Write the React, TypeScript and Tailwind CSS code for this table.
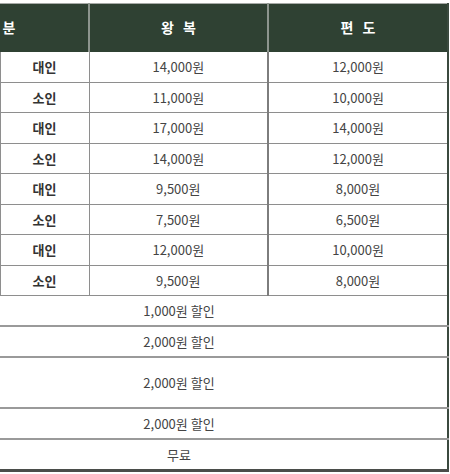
const fares = [
  { type: "대인", round: "14,000원", oneWay: "12,000원" },
  { type: "소인", round: "11,000원", oneWay: "10,000원" },
  { type: "대인", round: "17,000원", oneWay: "14,000원" },
  { type: "소인", round: "14,000원", oneWay: "12,000원" },
  { type: "대인", round: "9,500원", oneWay: "8,000원" },
  { type: "소인", round: "7,500원", oneWay: "6,500원" },
  { type: "대인", round: "12,000원", oneWay: "10,000원" },
  { type: "소인", round: "9,500원", oneWay: "8,000원" },
];

const discounts = [
  { text: "1,000원 할인", h: "h-[30px]" },
  { text: "2,000원 할인", h: "h-[31px]" },
  { text: "2,000원 할인", h: "h-[51px]" },
  { text: "2,000원 할인", h: "h-[31px]" },
  { text: "무료", h: "h-[32px]" },
];

export default function App() {
  return (
    <div className="w-[450px] h-[474px] overflow-hidden bg-white pt-[3px] font-['Noto_Sans_CJK_KR','Noto_Sans',sans-serif] text-[13px]">
      <table className="ml-[-89px] w-[537px] table-fixed border-collapse border-r-2 border-b-[3px] border-r-[#3b4a3f] border-b-[#4a4d4a]">
        <colgroup>
          <col className="w-[89px]" />
          <col className="w-[89px]" />
          <col className="w-[179px]" />
          <col className="w-[180px]" />
        </colgroup>
        <thead>
          <tr className="h-[48px] bg-[#2f4133] text-white font-bold text-[14px]">
            <th colSpan={2} className="border-t border-t-[#a7aaa7] border-r-2 border-r-[#8d958e] tracking-[3px]">
              구 분
            </th>
            <th className="border-t border-t-[#a7aaa7] border-r-2 border-r-[#8d958e] tracking-[3px] pl-[3px]">
              왕 복
            </th>
            <th className="border-t border-t-[#a7aaa7] tracking-[3px] pl-[3px]">편 도</th>
          </tr>
        </thead>
        <tbody>
          {fares.map((f, i) => (
            <tr key={i} className="h-[30.5px] border-b border-[#8e8e8e]">
              {i % 2 === 0 ? (
                <td rowSpan={2} className="border-r border-[#8e8e8e]" />
              ) : null}
              <td className="text-center font-bold text-[#333] border-r border-[#8e8e8e] leading-none">
                {f.type}
              </td>
              <td className="text-center text-[#444] border-r-2 border-[#7d7d7d] leading-none">{f.round}</td>
              <td className="text-center text-[#444] leading-none">{f.oneWay}</td>
            </tr>
          ))}
          {discounts.map((d, i) => (
            <tr
              key={"d" + i}
              className={`${d.h} ${i < discounts.length - 1 ? "border-b-2 border-[#9a9a9a]" : ""}`}
            >
              <td colSpan={4} className="text-center text-[#444] leading-none">
                {d.text}
              </td>
            </tr>
          ))}
        </tbody>
      </table>
    </div>
  );
}
